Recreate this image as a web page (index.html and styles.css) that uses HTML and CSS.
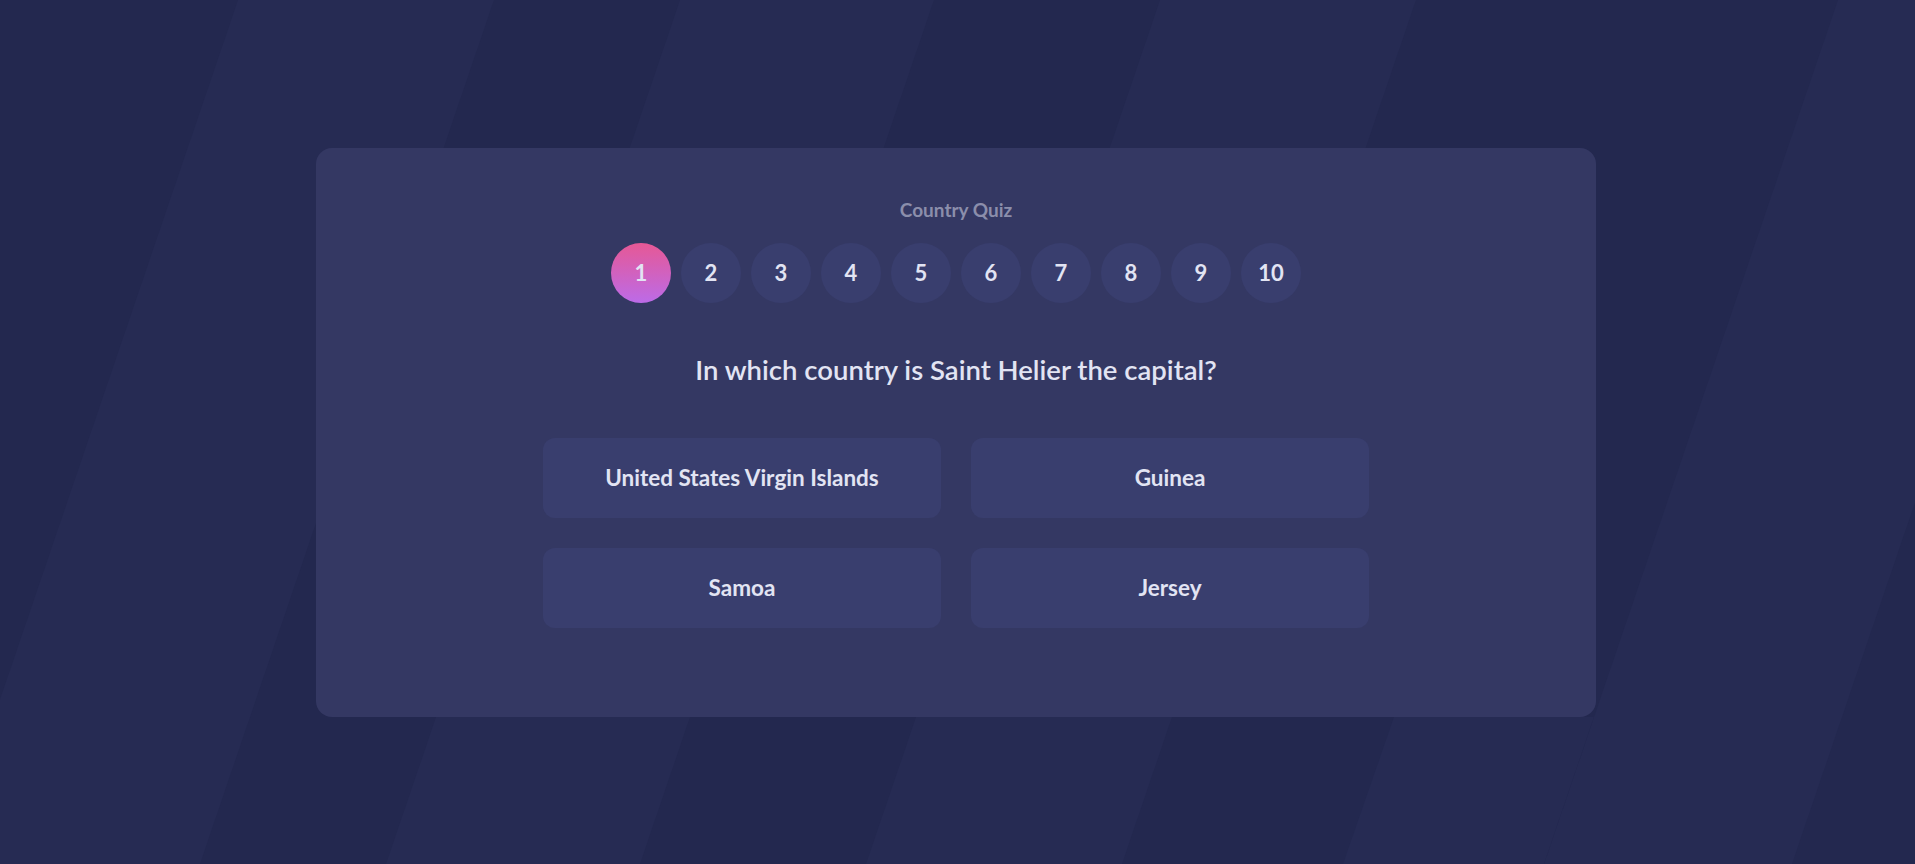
FILE: index.html
```html
<!DOCTYPE html>
<html lang="en">
<head>
<meta charset="utf-8">
<title>Country Quiz</title>
<link rel="stylesheet" href="styles.css">
</head>
<body>
<svg class="bg" viewBox="0 0 1915 864" preserveAspectRatio="none" aria-hidden="true">
  <polygon points="238,0 494,0 200,864 -56,864"/>
  <polygon points="680,0 934,0 640,864 386,864"/>
  <polygon points="1160,0 1416,0 1122,864 866,864"/>
  <polygon points="1838,0 2086,0 1792,864 1544,864"/>
  <polygon points="1394,717 1594,717 1544,864 1343,864"/>
</svg>
<main class="page">
  <section class="card">
    <h1 class="title">Country Quiz</h1>
    <ol class="steps">
      <li class="step active">1</li>
      <li class="step">2</li>
      <li class="step">3</li>
      <li class="step">4</li>
      <li class="step">5</li>
      <li class="step">6</li>
      <li class="step">7</li>
      <li class="step">8</li>
      <li class="step">9</li>
      <li class="step">10</li>
    </ol>
    <h2 class="question">In which country is Saint Helier the capital?</h2>
    <div class="answers">
      <button class="answer">United States Virgin Islands</button>
      <button class="answer">Guinea</button>
      <button class="answer">Samoa</button>
      <button class="answer">Jersey</button>
    </div>
  </section>
</main>
</body>
</html>
```
FILE: styles.css
```css
html, body {
  margin: 0;
  padding: 0;
}

body {
  background: #23284f;
  font-family: "Lato", "Inter", sans-serif;
  color: #e2e4f3;
  overflow: hidden;
}

.bg {
  position: fixed;
  inset: 0;
  width: 100%;
  height: 100%;
  z-index: 0;
}

.bg polygon {
  fill: #262b53;
}

.page {
  position: relative;
  z-index: 1;
  min-height: 100vh;
  box-sizing: border-box;
  padding-right: 3px;
  display: flex;
  align-items: center;
  justify-content: center;
}

.card {
  width: 1280px;
  box-sizing: border-box;
  padding: 52px 0 89px;
  background: #343863;
  border-radius: 16px;
  display: flex;
  flex-direction: column;
  align-items: center;
}

.title {
  margin: 0;
  font-size: 19px;
  line-height: 20px;
  font-weight: 700;
  color: #8b8eab;
}

.steps {
  list-style: none;
  margin: 23px 0 0;
  padding: 0;
  display: flex;
  gap: 10px;
}

.step {
  width: 60px;
  height: 60px;
  border-radius: 50%;
  background: #393e6e;
  display: flex;
  align-items: center;
  justify-content: center;
  font-size: 22px;
  font-weight: 700;
  color: #e2e4f3;
}

.step.active {
  background: linear-gradient(180deg, #e65895 0%, #bc6be8 100%);
}

.question {
  margin: 51px 0 0;
  font-size: 27.5px;
  line-height: 32px;
  font-weight: 600;
  color: #e2e4f3;
}

.answers {
  margin-top: 52px;
  display: grid;
  grid-template-columns: repeat(2, 398px);
  gap: 30px;
}

.answer {
  height: 80px;
  border: 0;
  border-radius: 12px;
  background: #393e6e;
  color: #e2e4f3;
  font-family: "Lato", "Inter", sans-serif;
  font-size: 22.5px;
  font-weight: 700;
  cursor: pointer;
}
```
